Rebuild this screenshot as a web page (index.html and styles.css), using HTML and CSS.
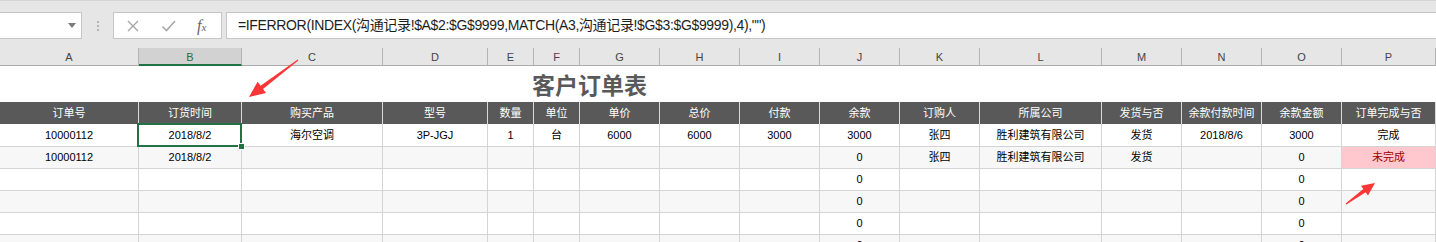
FILE: index.html
```html
<!DOCTYPE html>
<html>
<head>
  <title>客户订单表</title>
  <link rel="stylesheet" href="styles.css">
</head>
<body>
  <div id="toolbar">
    <div class="namebox"><span class="caret"></span></div>
    <div class="grip"><i></i><i></i><i></i></div>
    <div class="fxbox">
      <svg class="tool" width="14" height="14" viewBox="0 0 14 14"><path d="M2 2 L12 12 M12 2 L2 12" stroke="#a8a8a8" stroke-width="1.4" fill="none"/></svg>
      <svg class="tool" width="16" height="14" viewBox="0 0 16 14"><path d="M1.5 7.5 L5.5 11.5 L14 2" stroke="#a8a8a8" stroke-width="1.6" fill="none"/></svg>
      <span class="fx">f<sub>x</sub></span>
    </div>
    <div class="formula">=IFERROR(INDEX(沟通记录!$A$2:$G$9999,MATCH(A3,沟通记录!$G$3:$G$9999),4),"")</div>
  </div>

  <div class="row colheads">
    <div>A</div><div class="sel">B</div><div>C</div><div>D</div><div>E</div><div>F</div>
    <div>G</div><div>H</div><div>I</div><div>J</div><div>K</div><div>L</div>
    <div>M</div><div>N</div><div>O</div><div>P</div>
  </div>

  <div class="title">客户订单表</div>

  <div class="row header">
    <div>订单号</div><div>订货时间</div><div>购买产品</div><div>型号</div><div>数量</div><div>单位</div>
    <div>单价</div><div>总价</div><div>付款</div><div>余款</div><div>订购人</div><div>所属公司</div>
    <div>发货与否</div><div>余款付款时间</div><div>余款金额</div><div>订单完成与否</div>
  </div>

  <div class="row data first">
    <div>10000112</div><div class="active">2018/8/2</div><div>海尔空调</div><div>3P-JGJ</div><div>1</div><div>台</div>
    <div>6000</div><div>6000</div><div>3000</div><div>3000</div><div>张四</div><div>胜利建筑有限公司</div>
    <div>发货</div><div>2018/8/6</div><div>3000</div><div>完成</div>
  </div>
  <div class="row data band">
    <div>10000112</div><div>2018/8/2</div><div></div><div></div><div></div><div></div>
    <div></div><div></div><div></div><div>0</div><div>张四</div><div>胜利建筑有限公司</div>
    <div>发货</div><div></div><div>0</div><div class="bad">未完成</div>
  </div>
  <div class="row data">
    <div></div><div></div><div></div><div></div><div></div><div></div>
    <div></div><div></div><div></div><div>0</div><div></div><div></div>
    <div></div><div></div><div>0</div><div></div>
  </div>
  <div class="row data band">
    <div></div><div></div><div></div><div></div><div></div><div></div>
    <div></div><div></div><div></div><div>0</div><div></div><div></div>
    <div></div><div></div><div>0</div><div></div>
  </div>
  <div class="row data">
    <div></div><div></div><div></div><div></div><div></div><div></div>
    <div></div><div></div><div></div><div>0</div><div></div><div></div>
    <div></div><div></div><div>0</div><div></div>
  </div>
  <div class="row data band">
    <div></div><div></div><div></div><div></div><div></div><div></div>
    <div></div><div></div><div></div><div>0</div><div></div><div></div>
    <div></div><div></div><div>0</div><div></div>
  </div>

  <!-- red annotation arrows drawn over the sheet -->
  <svg class="arrows" width="1436" height="242" viewBox="0 0 1436 242">
    <polygon fill="#fb3636" points="297.7,59.6 260.6,85.8 257.6,81.8 249,97 266,92.9 263,89 298.3,60.4"/>
    <polygon fill="#fb3636" points="1346.4,204.6 1365.7,192.2 1368,195.5 1375,183 1361,185.7 1363.3,189 1345.6,203.4"/>
  </svg>
</body>
</html>
```

FILE: styles.css
```css
body {
  margin: 0;
  padding: 0;
  font-family: "Liberation Sans", "Noto Sans CJK SC", sans-serif;
  background: #ffffff;
  position: relative;
  height: 242px;
  overflow: hidden;
}

#toolbar {
  display: flex;
  align-items: flex-start;
  height: 48px;
  padding-top: 12px;
  box-sizing: border-box;
  background: #e6e6e6;
  border-top: 1px solid #d6d6d6;
}

.namebox {
  width: 82px;
  height: 27px;
  box-sizing: border-box;
  background: #fff;
  border: 1px solid #c6c6c6;
  border-left: none;
  position: relative;
  margin-top: -1px;
}

.caret {
  position: absolute;
  left: 68px;
  top: 10px;
  border-left: 4px solid transparent;
  border-right: 4px solid transparent;
  border-top: 5px solid #7a7a7a;
}

.grip {
  width: 31px;
  display: flex;
  flex-direction: column;
  align-items: center;
  gap: 2px;
  padding-top: 8px;
}

.grip i {
  width: 2px;
  height: 2px;
  background: #b4b4b4;
}

.fxbox {
  width: 109px;
  height: 27px;
  box-sizing: border-box;
  background: #fff;
  border: 1px solid #c6c6c6;
  margin-top: -1px;
  display: flex;
  align-items: center;
  padding-left: 12px;
  gap: 21px;
}

.fx {
  font-family: "Liberation Serif", serif;
  font-style: italic;
  font-size: 16px;
  color: #666;
  margin-left: -1px;
}

.fx sub {
  font-size: 11px;
  vertical-align: 0;
}

.formula {
  flex: 1;
  margin-left: 4px;
  height: 27px;
  box-sizing: border-box;
  background: #fff;
  border: 1px solid #c6c6c6;
  border-right: none;
  margin-top: -1px;
  padding-left: 11px;
  font-size: 14px;
  letter-spacing: -0.35px;
  line-height: 25px;
  color: #1e1e1e;
  white-space: nowrap;
}

.row {
  display: grid;
  grid-template-columns: 139px 103px 141px 105px 46px 46px 80px 80px 80px 80px 80px 122px 80px 80px 80px 94px;
}

.row > div {
  box-sizing: border-box;
  text-align: center;
  white-space: nowrap;
  overflow: hidden;
}

.colheads {
  background: #e6e6e6;
  height: 18px;
}

.colheads > div {
  height: 18px;
  border-right: 1px solid #b4b4b4;
  border-bottom: 1px solid #ababab;
  font-size: 11px;
  line-height: 18px;
  color: #444;
}

.colheads > div.sel {
  background: #d2d2d2;
  color: #217346;
  border-bottom: 2px solid #217346;
}

.title {
  height: 36px;
  padding-left: 532px;
  font-family: "Noto Sans CJK SC", sans-serif;
  font-size: 23px;
  font-weight: bold;
  line-height: 36px;
  color: #595959;
}

.header {
  background: #595959;
}

.header > div {
  height: 22px;
  border-right: 1px solid #d9d9d9;
  color: #fff;
  font-size: 11px;
  line-height: 22px;
}

.data > div {
  height: 22px;
  border-right: 1px solid #d4d4d4;
  border-bottom: 1px solid #d4d4d4;
  font-size: 11px;
  line-height: 21px;
  color: #000;
}

.data.first > div {
  height: 23px;
  line-height: 22px;
}

.band {
  background: #f7f7f7;
}

.data > div.bad {
  background: #ffc7ce;
  color: #9c0006;
}

.data > div.active {
  position: relative;
  overflow: visible;
}

.active::after {
  content: "";
  position: absolute;
  left: -2px;
  top: -1px;
  right: -1px;
  bottom: -1px;
  border: 2px solid #217346;
}

.active::before {
  content: "";
  position: absolute;
  right: -4px;
  bottom: -4px;
  width: 5px;
  height: 5px;
  background: #217346;
  border: 1px solid #fff;
  z-index: 1;
}

.arrows {
  position: absolute;
  left: 0;
  top: 0;
  pointer-events: none;
}
```
